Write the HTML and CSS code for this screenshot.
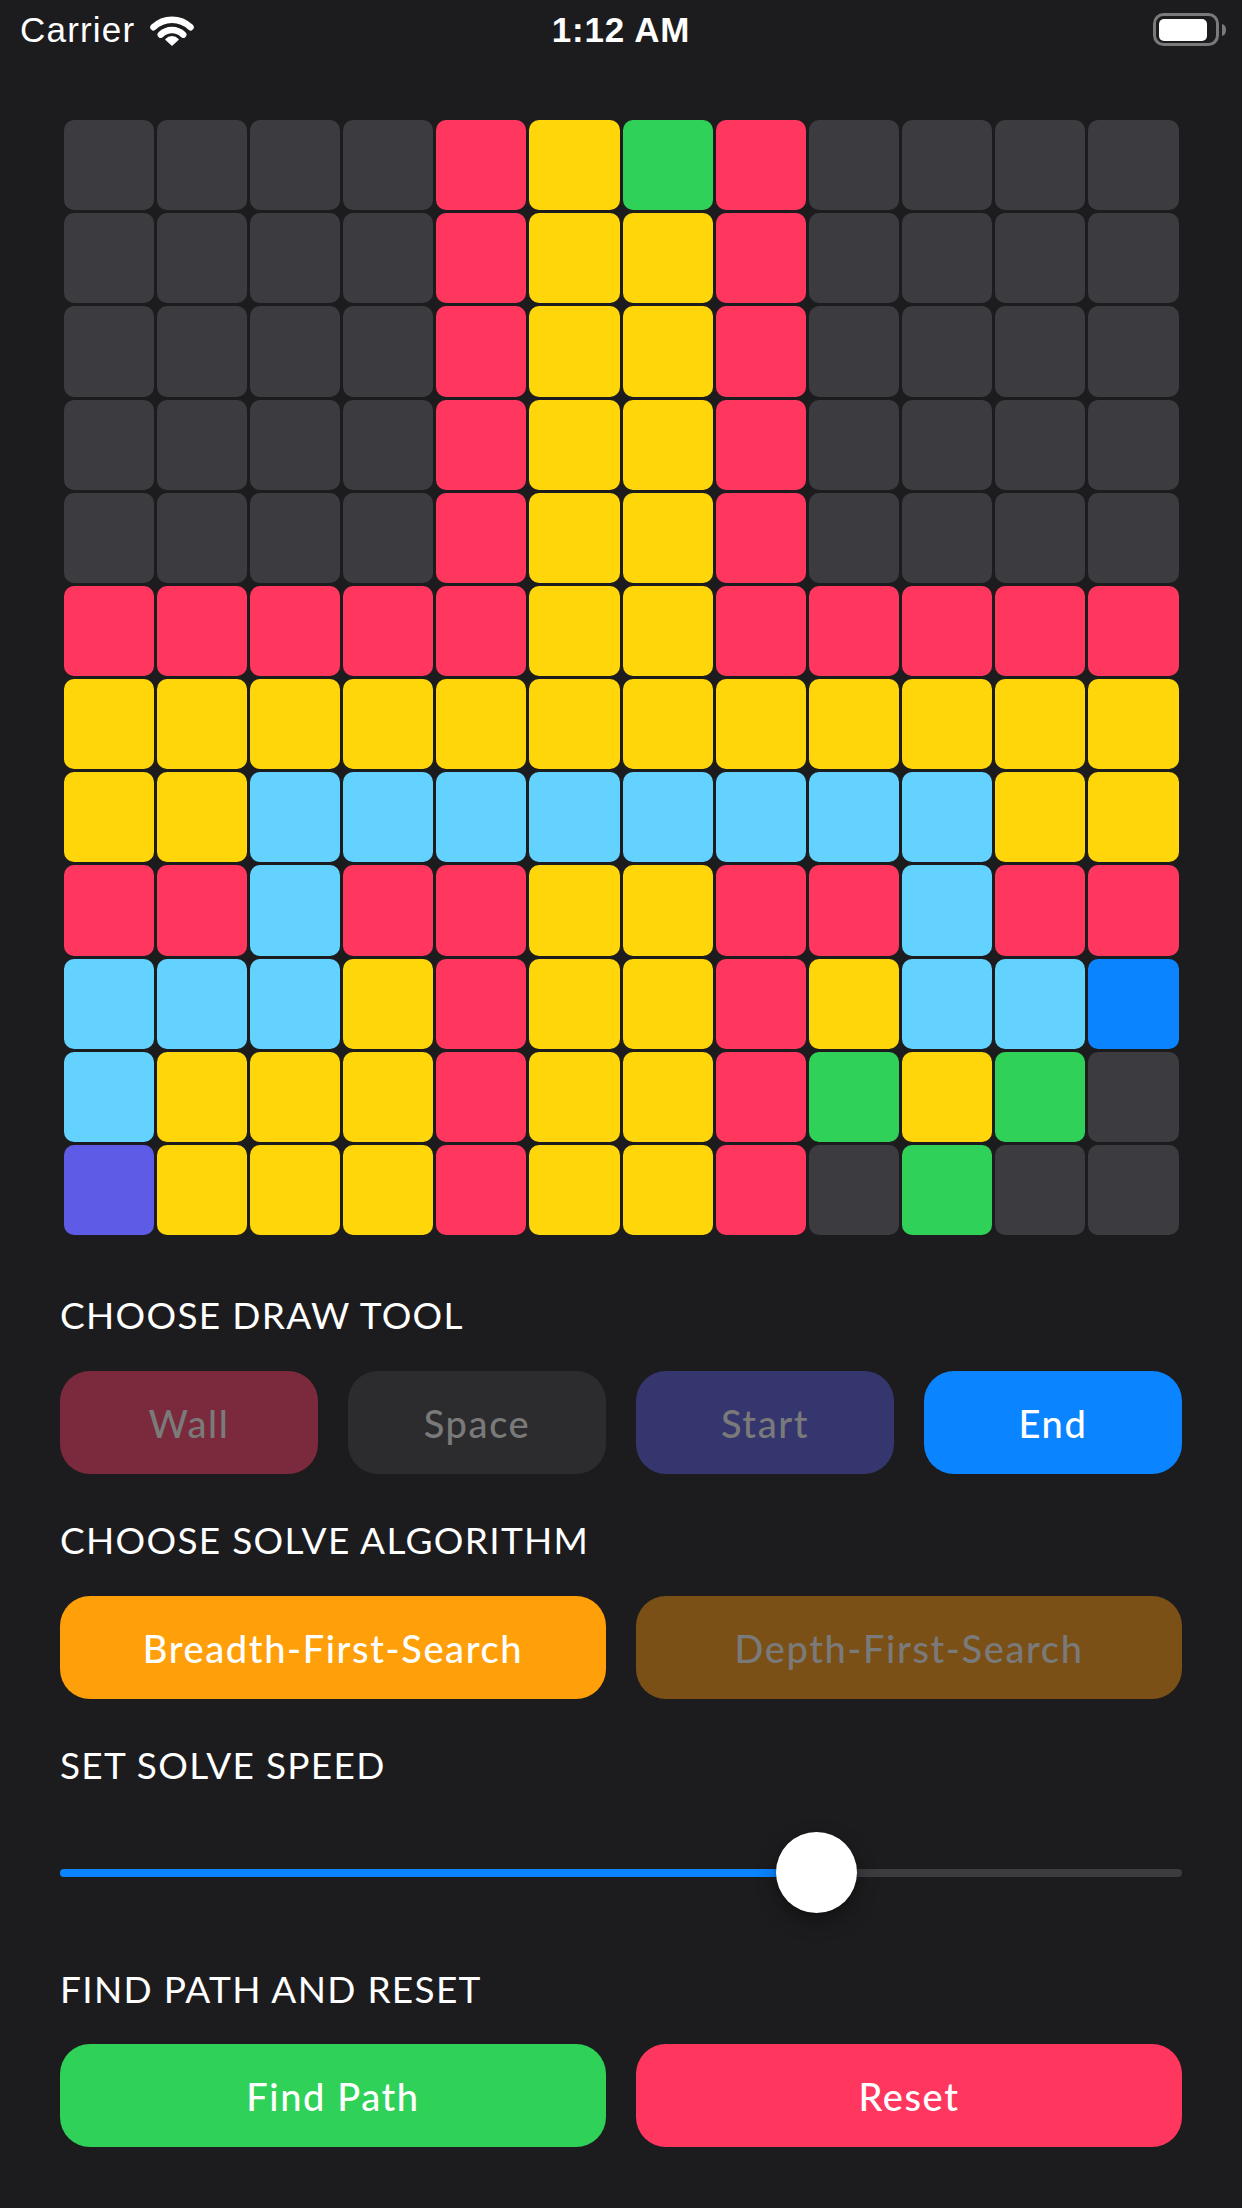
FILE: index.html
```html
<!DOCTYPE html>
<html lang="en">
<head>
<meta charset="utf-8">
<title>Pathfinder</title>
<link rel="stylesheet" href="styles.css">
</head>
<body>
<div class="status-bar">
  <div class="sb-left">
    <span class="carrier">Carrier</span>
    <svg class="wifi" width="46" height="33" viewBox="0 0 46 33">
      <path d="M4.5 14.2 A26.5 26.5 0 0 1 41.5 14.2" fill="none" stroke="#fff" stroke-width="6.5" stroke-linecap="round"/>
      <path d="M11.8 21.6 A16 16 0 0 1 34.2 21.6" fill="none" stroke="#fff" stroke-width="6.5" stroke-linecap="round"/>
      <path d="M23 32 L17 26.5 A8 8 0 0 1 29 26.5 Z" fill="#fff" stroke="#fff" stroke-width="1.5" stroke-linejoin="round"/>
    </svg>
  </div>
  <div class="sb-time">1:12 AM</div>
  <div class="sb-right">
    <svg class="battery" width="74" height="34" viewBox="0 0 74 34">
      <rect x="1.5" y="1.5" width="63" height="30" rx="9" fill="none" stroke="#7a7a7a" stroke-width="3"/>
      <rect x="6" y="6" width="48" height="22" rx="5" fill="#fff"/>
      <path d="M69 11 Q73 12 73 17 Q73 22 69 23 Z" fill="#7a7a7a"/>
    </svg>
  </div>
</div>

<main class="content">
  <div class="grid">
    <div class="cell d"></div><div class="cell d"></div><div class="cell d"></div><div class="cell d"></div><div class="cell r"></div><div class="cell y"></div><div class="cell g"></div><div class="cell r"></div><div class="cell d"></div><div class="cell d"></div><div class="cell d"></div><div class="cell d"></div>
    <div class="cell d"></div><div class="cell d"></div><div class="cell d"></div><div class="cell d"></div><div class="cell r"></div><div class="cell y"></div><div class="cell y"></div><div class="cell r"></div><div class="cell d"></div><div class="cell d"></div><div class="cell d"></div><div class="cell d"></div>
    <div class="cell d"></div><div class="cell d"></div><div class="cell d"></div><div class="cell d"></div><div class="cell r"></div><div class="cell y"></div><div class="cell y"></div><div class="cell r"></div><div class="cell d"></div><div class="cell d"></div><div class="cell d"></div><div class="cell d"></div>
    <div class="cell d"></div><div class="cell d"></div><div class="cell d"></div><div class="cell d"></div><div class="cell r"></div><div class="cell y"></div><div class="cell y"></div><div class="cell r"></div><div class="cell d"></div><div class="cell d"></div><div class="cell d"></div><div class="cell d"></div>
    <div class="cell d"></div><div class="cell d"></div><div class="cell d"></div><div class="cell d"></div><div class="cell r"></div><div class="cell y"></div><div class="cell y"></div><div class="cell r"></div><div class="cell d"></div><div class="cell d"></div><div class="cell d"></div><div class="cell d"></div>
    <div class="cell r"></div><div class="cell r"></div><div class="cell r"></div><div class="cell r"></div><div class="cell r"></div><div class="cell y"></div><div class="cell y"></div><div class="cell r"></div><div class="cell r"></div><div class="cell r"></div><div class="cell r"></div><div class="cell r"></div>
    <div class="cell y"></div><div class="cell y"></div><div class="cell y"></div><div class="cell y"></div><div class="cell y"></div><div class="cell y"></div><div class="cell y"></div><div class="cell y"></div><div class="cell y"></div><div class="cell y"></div><div class="cell y"></div><div class="cell y"></div>
    <div class="cell y"></div><div class="cell y"></div><div class="cell c"></div><div class="cell c"></div><div class="cell c"></div><div class="cell c"></div><div class="cell c"></div><div class="cell c"></div><div class="cell c"></div><div class="cell c"></div><div class="cell y"></div><div class="cell y"></div>
    <div class="cell r"></div><div class="cell r"></div><div class="cell c"></div><div class="cell r"></div><div class="cell r"></div><div class="cell y"></div><div class="cell y"></div><div class="cell r"></div><div class="cell r"></div><div class="cell c"></div><div class="cell r"></div><div class="cell r"></div>
    <div class="cell c"></div><div class="cell c"></div><div class="cell c"></div><div class="cell y"></div><div class="cell r"></div><div class="cell y"></div><div class="cell y"></div><div class="cell r"></div><div class="cell y"></div><div class="cell c"></div><div class="cell c"></div><div class="cell b"></div>
    <div class="cell c"></div><div class="cell y"></div><div class="cell y"></div><div class="cell y"></div><div class="cell r"></div><div class="cell y"></div><div class="cell y"></div><div class="cell r"></div><div class="cell g"></div><div class="cell y"></div><div class="cell g"></div><div class="cell d"></div>
    <div class="cell i"></div><div class="cell y"></div><div class="cell y"></div><div class="cell y"></div><div class="cell r"></div><div class="cell y"></div><div class="cell y"></div><div class="cell r"></div><div class="cell d"></div><div class="cell g"></div><div class="cell d"></div><div class="cell d"></div>
  </div>

  <section class="section first">
    <h2 class="title">CHOOSE DRAW TOOL</h2>
    <div class="btn-row four">
      <button class="btn wall">Wall</button>
      <button class="btn space">Space</button>
      <button class="btn start">Start</button>
      <button class="btn end active">End</button>
    </div>
  </section>

  <section class="section">
    <h2 class="title">CHOOSE SOLVE ALGORITHM</h2>
    <div class="btn-row two">
      <button class="btn bfs active">Breadth-First-Search</button>
      <button class="btn dfs">Depth-First-Search</button>
    </div>
  </section>

  <section class="section">
    <h2 class="title">SET SOLVE SPEED</h2>
    <div class="slider">
      <div class="track"><div class="fill" style="width: 67.4%"></div></div>
      <div class="thumb" style="left: calc(67.4% - 40.5px)"></div>
    </div>
  </section>

  <section class="section last">
    <h2 class="title">FIND PATH AND RESET</h2>
    <div class="btn-row two">
      <button class="btn find active">Find Path</button>
      <button class="btn reset active">Reset</button>
    </div>
  </section>
</main>
</body>
</html>
```

FILE: styles.css
```css
* { box-sizing: border-box; }

html, body {
  margin: 0;
  padding: 0;
  background: #1c1c1e;
}

body {
  width: 1242px;
  height: 2208px;
  overflow: hidden;
  font-family: "Lato", "Noto Sans", sans-serif;
  color: #fff;
}

/* status bar */
.status-bar {
  height: 60px;
  display: grid;
  grid-template-columns: 1fr auto 1fr;
  align-items: center;
  padding: 0 20px;
  font-family: "Liberation Sans", Arial, sans-serif;
  font-size: 35px;
  line-height: 60px;
  letter-spacing: 1.2px;
  color: #fff;
}

.sb-left {
  display: flex;
  align-items: center;
  gap: 14px;
}

.wifi { display: block; margin-top: -2px; }

.sb-time {
  font-weight: 700;
  text-align: center;
  letter-spacing: 0.8px;
}

.sb-right {
  display: flex;
  justify-content: flex-end;
  align-items: center;
  margin-right: -5px;
}

.battery { display: block; }

/* main */
.content {
  padding: 60px 60px 0;
}

.grid {
  margin: 0 3.5px;
  display: grid;
  grid-template-columns: repeat(12, 1fr);
  gap: 3px;
}

.cell {
  aspect-ratio: 1 / 1;
  border-radius: 10px;
}

.cell.d { background: #3c3c40; }
.cell.r { background: #ff375f; }
.cell.y { background: #ffd60a; }
.cell.g { background: #30d158; }
.cell.c { background: #64d2ff; }
.cell.b { background: #0a84ff; }
.cell.i { background: #5e5ce6; }

.section {
  margin-top: 46px;
}

.section.first { margin-top: 60px; }
.section.last { margin-top: 56px; }

.title {
  margin: 0 0 36px;
  font-size: 37px;
  line-height: 40px;
  font-weight: 400;
  letter-spacing: 1.3px;
  color: #fff;
}

.section.last .title { margin-bottom: 35px; }

.btn-row {
  display: grid;
  gap: 30px;
}

.btn-row.four { grid-template-columns: repeat(4, 1fr); }
.btn-row.two { grid-template-columns: repeat(2, 1fr); }

.btn {
  height: 103px;
  border: none;
  border-radius: 30px;
  font-family: "Lato", "Noto Sans", sans-serif;
  font-size: 38px;
  font-weight: 500;
  letter-spacing: 1.6px;
  color: #7a7a7a;
  padding: 0;
  text-align: center;
}

.btn.active { color: #fff; }

.btn.wall  { background: #7a2a3c; }
.btn.space { background: #2c2c2e; }
.btn.start { background: #36366e; }
.btn.end   { background: #0a84ff; }
.btn.bfs   { background: #ff9f0a; }
.btn.dfs   { background: #7a5016; }
.btn.find  { background: #30d158; }
.btn.reset { background: #ff375f; }

/* slider */
.slider {
  position: relative;
  height: 81px;
  margin-top: 47px;
  display: flex;
  align-items: center;
}

.track {
  flex: 1;
  height: 8px;
  border-radius: 4px;
  background: #3c3c40;
  overflow: hidden;
}

.fill {
  height: 100%;
  background: #0a84ff;
}

.thumb {
  position: absolute;
  top: 0;
  width: 81px;
  height: 81px;
  border-radius: 50%;
  background: #fff;
  box-shadow: 0 8px 20px rgba(0, 0, 0, 0.35), 0 1px 3px rgba(0, 0, 0, 0.2);
}
```
